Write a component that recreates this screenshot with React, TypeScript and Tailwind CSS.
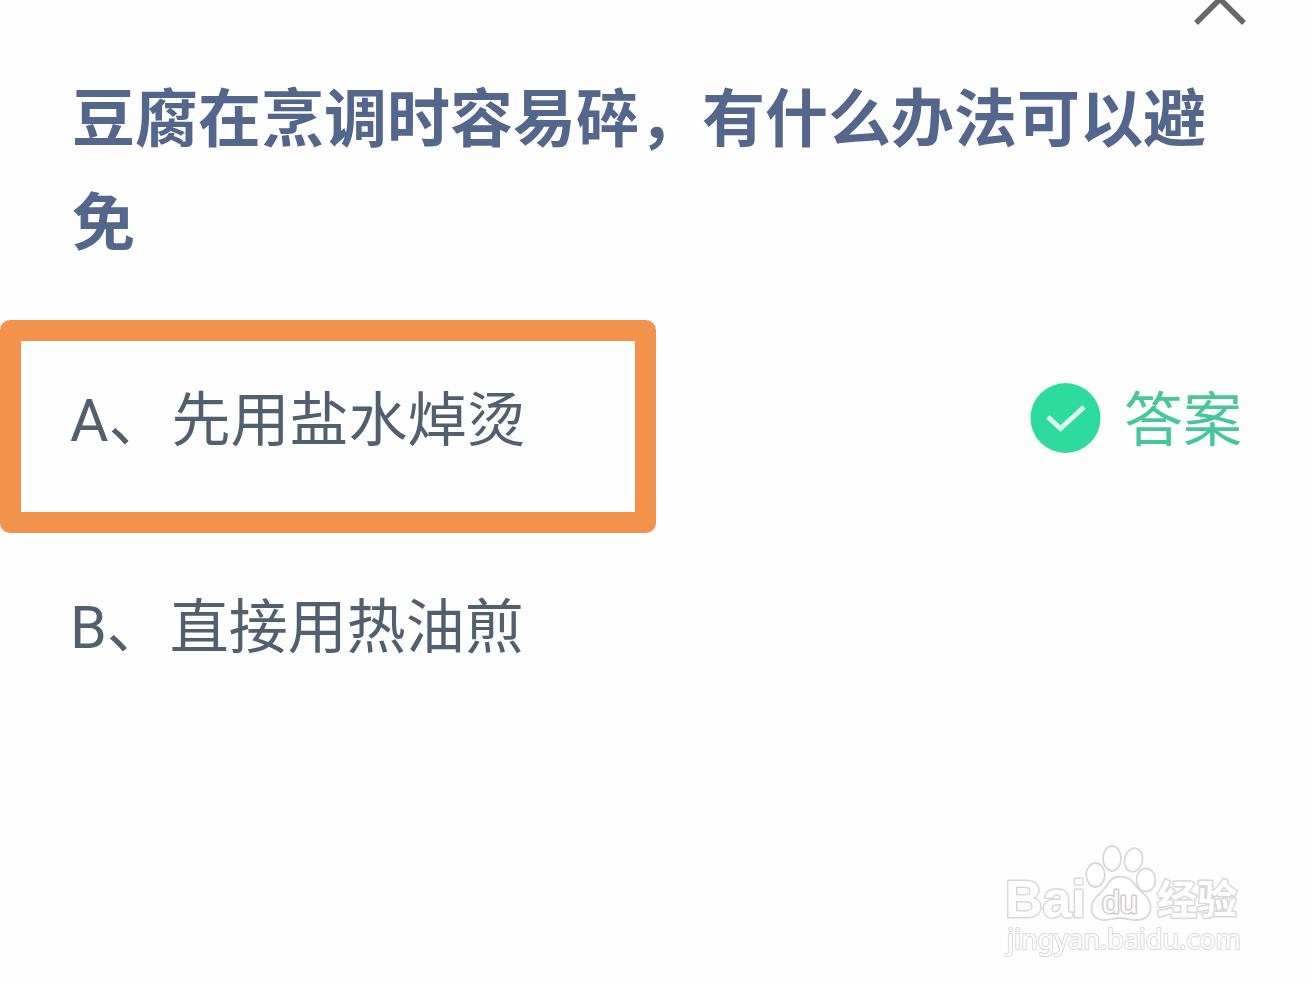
import React from 'react';

interface Option {
  letter: string;
  text: string;
  correct: boolean;
}

const question = '豆腐在烹调时容易碎，有什么办法可以避免';

const options: Option[] = [
  { letter: 'A', text: '先用盐水焯烫', correct: true },
  { letter: 'B', text: '直接用热油煎', correct: false },
];

const ChevronUp: React.FC = () => (
  <svg width="52" height="25" viewBox="0 0 52 25" fill="none" aria-hidden="true">
    <path d="M2 23 L26 -1 L50 23" stroke="#686868" strokeWidth="5.6" />
  </svg>
);

/** Green disc with a thin white tick, followed by the answer label */
const AnswerMark: React.FC = () => (
  <div className="flex items-center gap-[23px] pr-[70px] text-[#47c69a]">
    <svg width="71" height="71" viewBox="0 0 71 71" fill="none" aria-hidden="true" className="mb-1.5">
      <circle cx="35.5" cy="35" r="35" fill="#2cdb9d" />
      <path d="M18 34 L30.5 45.5 L54 24" stroke="#e2fff3" strokeWidth="4.8" />
    </svg>
    <span>答案</span>
  </div>
);

const OptionRow: React.FC<{ option: Option }> = ({ option }) => (
  <li className="flex items-start justify-between">
    <div
      className={
        option.correct
          ? 'flex h-[213px] w-1/2 gap-1 rounded-[10px] border-[21px] border-[#f3924b] pt-[37px] pl-[49px]'
          : 'flex w-1/2 gap-1 pt-[52px] pl-[70px]'
      }
    >
      <span>{option.letter}、</span>
      <span>{option.text}</span>
    </div>
    {option.correct && (
      <div className="pt-[58px]">
        <AnswerMark />
      </div>
    )}
  </li>
);

/** Outlined logo: white shapes with a faint grey edge */
const Watermark: React.FC = () => (
  <a href="#" className="mt-auto mr-[66px] mb-6 block self-end">
    <svg
      width="246"
      height="122"
      viewBox="0 0 246 122"
      fill="#ffffff"
      stroke="#d8d8d8"
      strokeWidth="2"
      strokeLinejoin="round"
      className="[paint-order:stroke]"
    >
      <text x="5" y="77" fontSize="52" fontWeight="700" fontFamily="Liberation Sans, sans-serif" strokeWidth="3">
        Bai
      </text>
      <g strokeWidth="1.8" className="[paint-order:normal]">
        <ellipse cx="95.5" cy="35" rx="9.3" ry="12" />
        <ellipse cx="112" cy="18.5" rx="9" ry="12.5" />
        <ellipse cx="133.5" cy="20" rx="9" ry="12" transform="rotate(12 133.5 20)" />
        <ellipse cx="146" cy="40" rx="9.5" ry="11.7" />
        <path d="M120 36.5 C112 36.5 109 42 105 48 C100 55 92 58 91.5 68 C91 76 98 80.5 105 80 C112 79.5 115 78 120 78 C126 78 129 80.5 137 80 C146 79.5 151 75 150.5 66 C150 57 142 54 136 46 C132 40 128 36.5 120 36.5 Z" />
      </g>
      <text x="102" y="73" fontSize="32" fontFamily="Liberation Sans, sans-serif" stroke="#cccccc" strokeWidth="3">
        du
      </text>
      <text x="157" y="74" fontSize="40" fontWeight="700" fontFamily="Noto Sans CJK SC, sans-serif" strokeWidth="3">
        经验
      </text>
      <text x="7" y="109" fontSize="27" fontFamily="Noto Sans, sans-serif" strokeWidth="2">
        jingyan.baidu.com
      </text>
    </svg>
  </a>
);

export default function App() {
  return (
    <main
      lang="zh-CN"
      className="flex min-h-screen flex-col bg-[#fefefe] font-[Roboto,'Noto_Sans_CJK_SC',sans-serif]"
    >
      <button type="button" aria-label="收起" className="mr-[66px] self-end">
        <ChevronUp />
      </button>

      <h1 className="mt-[43px] px-[72px] text-[63px] leading-[104px] font-bold text-[#53668c]">{question}</h1>

      <ul className="mt-11 text-[59px] leading-[86px] text-[#50606f]">
        {options.map((option) => (
          <OptionRow key={option.letter} option={option} />
        ))}
      </ul>

      <Watermark />
    </main>
  );
}
